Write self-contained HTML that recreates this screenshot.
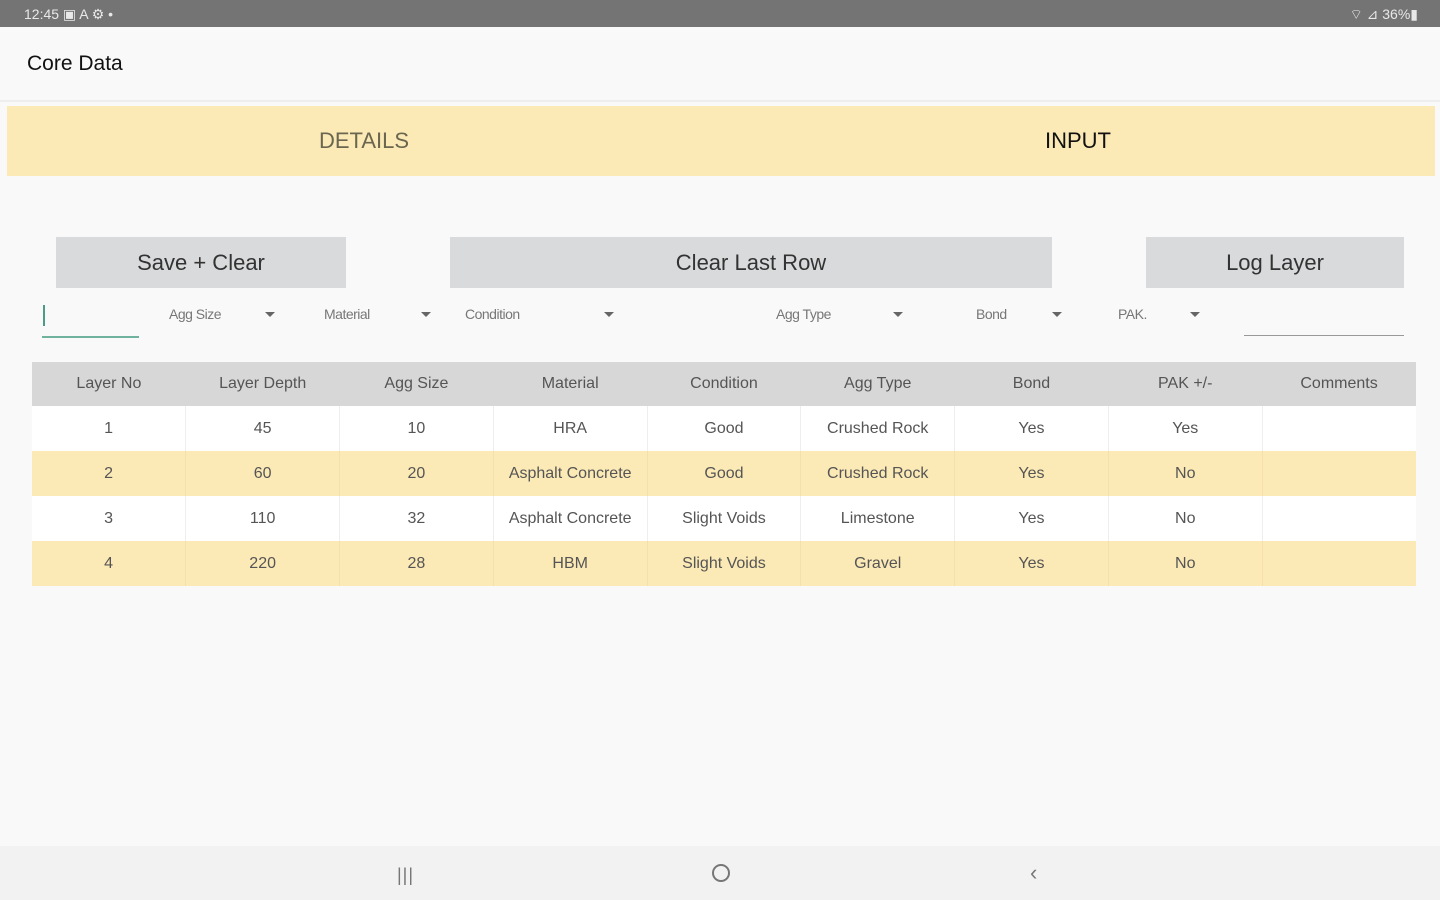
<!DOCTYPE html>
<html><head><meta charset="utf-8"><style>
*{margin:0;padding:0;box-sizing:border-box}
body{width:1440px;height:900px;background:#f9f9f9;font-family:"Liberation Sans",sans-serif;position:relative;overflow:hidden}
.a{position:absolute}
.sb{left:0;top:0;width:1440px;height:27px;background:#747474;color:#e8e8e8;font-size:14px}
.tabs{left:7px;top:106px;width:1428px;height:70px;background:#fbe9b6}
.tab{position:absolute;top:0;height:70px;line-height:70px;font-size:22px;text-align:center;width:714px}
.btn{background:#d9dadb;top:237px;height:51px;line-height:51px;text-align:center;font-size:22px;color:#333}
.dd{top:306px;font-size:14px;color:#777;letter-spacing:-0.5px}
.ar{top:312px;width:0;height:0;border-left:5px solid transparent;border-right:5px solid transparent;border-top:5px solid #666}
table{position:absolute;left:32px;top:362px;width:1384px;border-collapse:collapse;font-size:16px;color:#555;table-layout:fixed}
td,th{text-align:center;height:45px;font-weight:normal;border-left:1px solid #eeeeee}
td:first-child,th:first-child{border-left:none}
th{background:#d7d7d7;height:44px;border-left:none}
tr.w td{background:#fff}
tr.y td{background:#fbe9b6;border-left-color:#f3e0ad}
</style></head><body>
<div class="a sb"><span class="a" style="left:24px;top:6px">12:45 ▣ A ⚙ •</span><span class="a" style="right:22px;top:6px">⌔ ⊿ 36%▮</span></div>
<div class="a" style="left:0;top:27px;width:1440px;height:75px;background:#f9f9f9;border-bottom:2px solid #eee"></div>
<div class="a" style="left:27px;top:52px;font-size:21px;color:#111">Core Data</div>
<div class="a tabs"><div class="tab" style="left:0;color:#6b6650">DETAILS</div><div class="tab" style="left:714px;color:#111">INPUT</div></div>
<div class="a btn" style="left:56px;width:290px">Save + Clear</div>
<div class="a btn" style="left:450px;width:602px">Clear Last Row</div>
<div class="a btn" style="left:1146px;width:258px">Log Layer</div>
<div class="a" style="left:43px;top:305px;width:2px;height:21px;background:#4a9c86"></div>
<div class="a" style="left:42px;top:336px;width:97px;height:2px;background:#6fb39f"></div>
<div class="a" style="left:1244px;top:335px;width:160px;height:1px;background:#999"></div>
<div class="a dd" style="left:169px">Agg Size</div><div class="a ar" style="left:265px"></div>
<div class="a dd" style="left:324px">Material</div><div class="a ar" style="left:421px"></div>
<div class="a dd" style="left:465px">Condition</div><div class="a ar" style="left:604px"></div>
<div class="a dd" style="left:776px">Agg Type</div><div class="a ar" style="left:893px"></div>
<div class="a dd" style="left:976px">Bond</div><div class="a ar" style="left:1052px"></div>
<div class="a dd" style="left:1118px">PAK.</div><div class="a ar" style="left:1190px"></div>
<table>
<tr><th>Layer No</th><th>Layer Depth</th><th>Agg Size</th><th>Material</th><th>Condition</th><th>Agg Type</th><th>Bond</th><th>PAK +/-</th><th>Comments</th></tr>
<tr class="w"><td>1</td><td>45</td><td>10</td><td>HRA</td><td>Good</td><td>Crushed Rock</td><td>Yes</td><td>Yes</td><td></td></tr>
<tr class="y"><td>2</td><td>60</td><td>20</td><td>Asphalt Concrete</td><td>Good</td><td>Crushed Rock</td><td>Yes</td><td>No</td><td></td></tr>
<tr class="w"><td>3</td><td>110</td><td>32</td><td>Asphalt Concrete</td><td>Slight Voids</td><td>Limestone</td><td>Yes</td><td>No</td><td></td></tr>
<tr class="y"><td>4</td><td>220</td><td>28</td><td>HBM</td><td>Slight Voids</td><td>Gravel</td><td>Yes</td><td>No</td><td></td></tr>
</table>
<div class="a" style="left:0;top:846px;width:1440px;height:54px;background:#f2f2f2"></div>
<div class="a" style="left:397px;top:865px;font-size:18px;color:#777;letter-spacing:1px">|||</div>
<div class="a" style="left:712px;top:864px;width:18px;height:18px;border:2px solid #777;border-radius:50%"></div>
<div class="a" style="left:1030px;top:860px;font-size:22px;color:#777">‹</div>
</body></html>
